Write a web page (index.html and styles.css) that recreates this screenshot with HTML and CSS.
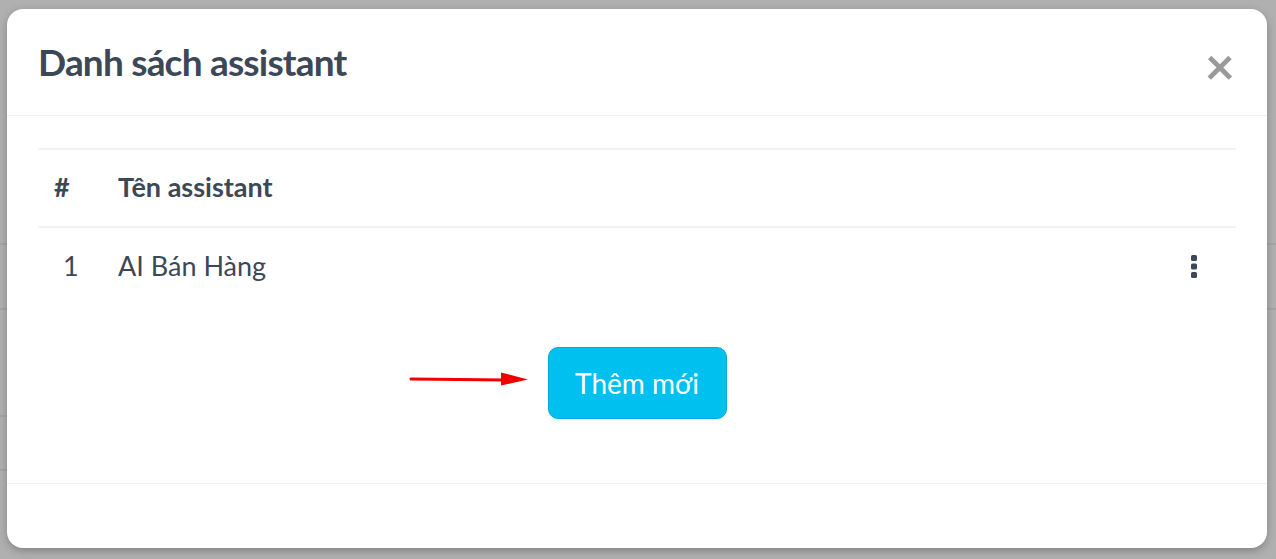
FILE: index.html
```html
<!DOCTYPE html>
<html lang="vi">
<head>
    <meta charset="UTF-8">
    <meta name="viewport" content="width=device-width, initial-scale=1.0">
    <title>Danh sách assistant</title>
    <link rel="stylesheet" href="styles.css">
</head>
<body>
    <!-- Page behind the modal -->
    <div class="backdrop">
        <div class="bg-line bg-line-1"></div>
        <div class="bg-line bg-line-2"></div>
        <div class="bg-line bg-line-3"></div>
        <div class="bg-line bg-line-4"></div>
    </div>

    <div class="modal">
        <div class="modal-header">
            <h2>Danh sách assistant</h2>
            <span class="close">&times;</span>
        </div>

        <div class="modal-body">
            <table class="assistant-table">
                <thead>
                    <tr>
                        <th class="col-index">#</th>
                        <th>Tên assistant</th>
                        <th class="col-action"></th>
                    </tr>
                </thead>
                <tbody>
                    <tr>
                        <td class="col-index">1</td>
                        <td>AI Bán Hàng</td>
                        <td class="col-action">
                            <svg class="kebab" width="6" height="23" viewBox="0 0 6 23">
                                <rect x="0" y="0" width="6" height="6" rx="1.5" />
                                <rect x="0" y="8.5" width="6" height="6" rx="1.5" />
                                <rect x="0" y="17" width="6" height="6" rx="1.5" />
                            </svg>
                        </td>
                    </tr>
                </tbody>
            </table>

            <div class="actions">
                <div class="btn-wrap">
                    <!-- annotation arrow pointing at the button -->
                    <svg class="arrow" width="120" height="16" viewBox="0 0 120 16">
                        <line x1="2" y1="8" x2="96" y2="9" stroke="#f00000" stroke-width="3" stroke-linecap="round" />
                        <polygon points="92,1.5 119,8.5 92,14.5" fill="#f00000" />
                    </svg>
                    <button class="btn-add">Thêm mới</button>
                </div>
            </div>
        </div>

        <div class="modal-footer"></div>
    </div>
</body>
</html>
```

FILE: styles.css
```css
/* General Styles */
body {
    margin: 0;
    height: 559px;
    overflow: hidden;
    background-color: #b0b0b0;
    font-family: "Source Sans Pro", "Lato", "Noto Sans", sans-serif;
    color: #3c4858;
    display: flex;
    padding: 9px 9px 11px 7px;
    box-sizing: border-box;
    position: relative;
}

/* Faint page behind the overlay */
.backdrop {
    position: absolute;
    inset: 0;
    z-index: 0;
}

.bg-line {
    position: absolute;
    left: 0;
    right: 0;
    height: 2px;
    background-color: #a4a4a4;
}

.bg-line-1 { top: 243px; }
.bg-line-2 { top: 308px; }
.bg-line-3 { top: 415px; right: auto; width: 10px; }
.bg-line-4 { top: 469px; right: auto; width: 10px; }

/* Modal Styles */
.modal {
    position: relative;
    z-index: 1;
    flex: 1;
    background-color: #fff;
    border-radius: 16px;
    display: flex;
    flex-direction: column;
    box-shadow: 0 3px 8px rgba(0, 0, 0, 0.25);
}

.modal-header {
    height: 106px;
    display: flex;
    align-items: center;
    justify-content: space-between;
    padding: 0 32px 0 31px;
    border-bottom: 1px solid #f1f1f1;
}

.modal-header h2 {
    margin: 0;
    font-size: 37px;
    font-weight: 700;
    letter-spacing: -0.8px;
    padding-bottom: 2px;
}

.close {
    color: #9a9a9a;
    font-size: 52px;
    font-weight: 700;
    line-height: 1;
    margin-top: 6px;
    cursor: pointer;
}

.modal-body {
    flex: 1;
    padding: 32px 31px 0 31px;
    border-bottom: 1px solid #f1f1f1;
}

/* Table Styles */
.assistant-table {
    width: 100%;
    border-collapse: collapse;
    font-size: 27px;
}

.assistant-table th,
.assistant-table td {
    text-align: left;
    border-top: 2px solid #f3f3f3;
    padding: 0;
}

.assistant-table th {
    height: 73px;
    font-weight: 700;
    padding-bottom: 3px;
}

.assistant-table td {
    height: 74px;
    padding-bottom: 4px;
}

.assistant-table th.col-index {
    width: 64px;
    padding-left: 16px;
}

.assistant-table td.col-index {
    padding-left: 25px;
}

.col-action {
    width: 80px;
}

.kebab {
    display: block;
    fill: #3c4858;
    margin-left: 35px;
    margin-top: 2px;
}

/* Button + pointer */
.actions {
    display: flex;
    justify-content: center;
    margin-top: 41px;
}

.btn-wrap {
    position: relative;
}

.arrow {
    position: absolute;
    right: 100%;
    top: 24px;
    margin-right: 19px;
}

.btn-add {
    display: block;
    width: 179px;
    height: 72px;
    background-color: #00c0ef;
    border: 1px solid #00acd6;
    border-radius: 10px;
    color: #fff;
    font-family: inherit;
    font-size: 28px;
    cursor: pointer;
}

.modal-footer {
    height: 64px;
}
```
